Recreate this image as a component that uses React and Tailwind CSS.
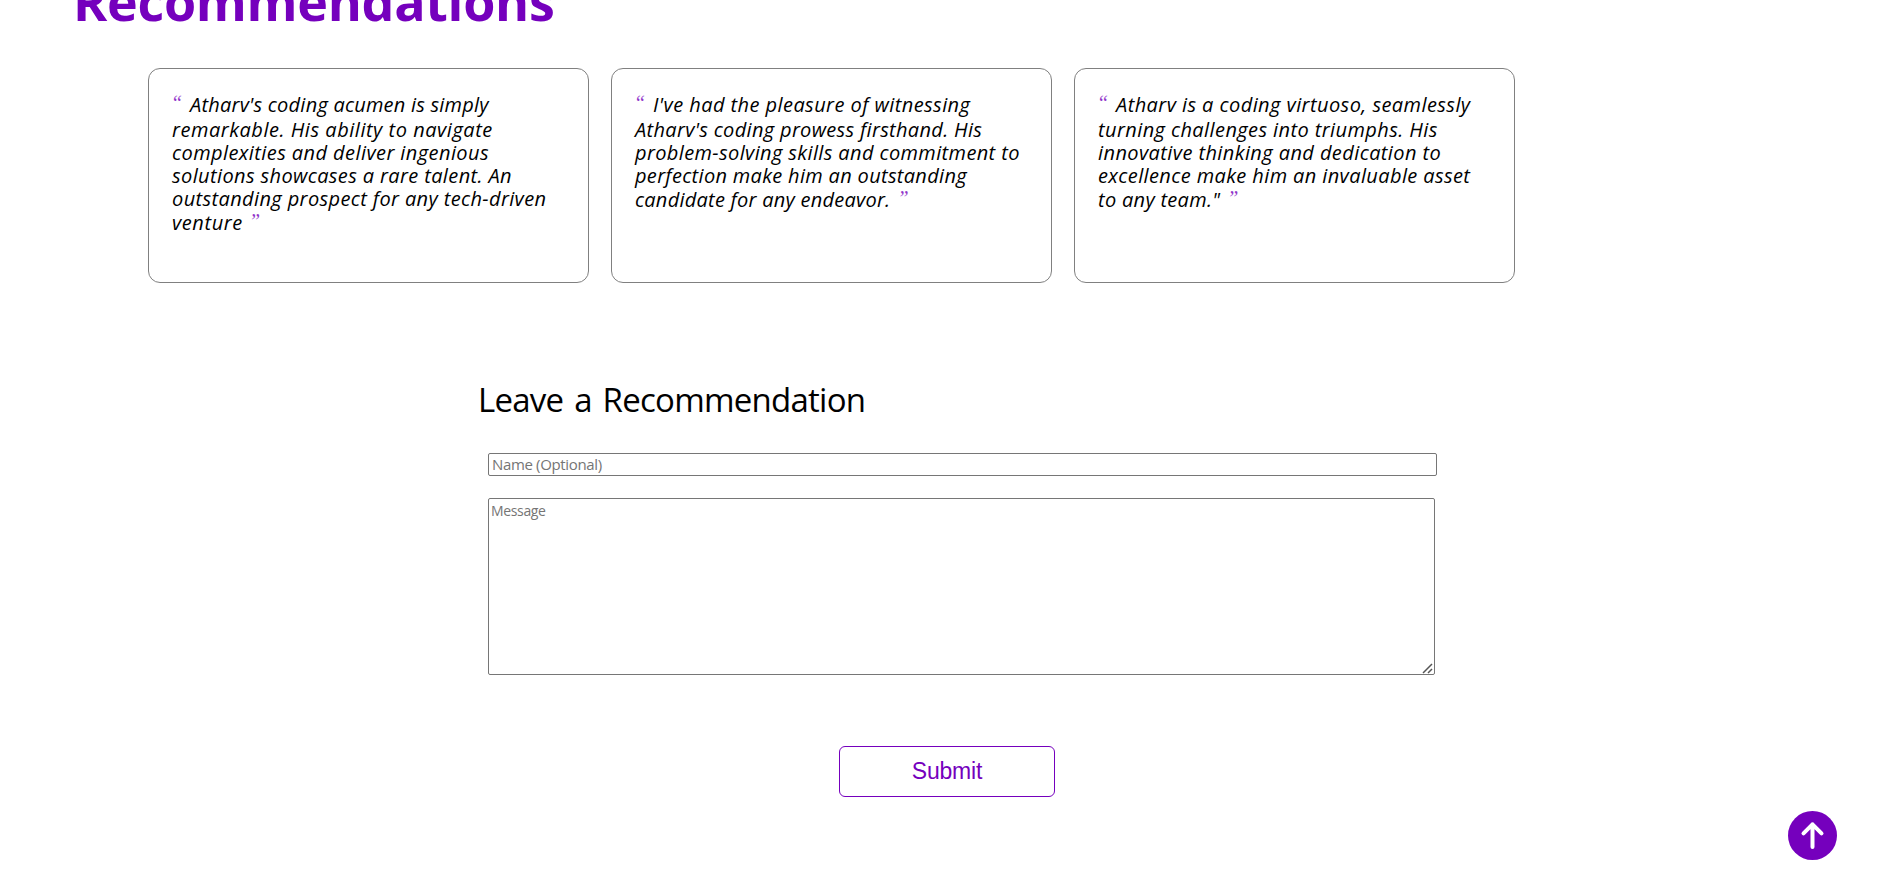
const quotes = [
  {
    lines: [
      ["Atharv's coding acumen is simply", 'tracking-[0.22px]'],
      ['remarkable. His ability to navigate', 'tracking-[0.53px]'],
      ['complexities and deliver ingenious', 'tracking-[0.42px]'],
      ['solutions showcases a rare talent. An', 'tracking-[0.38px]'],
      ['outstanding prospect for any tech-driven', 'tracking-[0.38px]'],
      ['venture', 'tracking-[0.6px]'],
    ],
    gap: 'ml-[6px]',
  },
  {
    lines: [
      ["I've had the pleasure of witnessing", 'tracking-[0.43px]'],
      ["Atharv's coding prowess firsthand. His", 'tracking-[0.32px]'],
      ['problem-solving skills and commitment to', 'tracking-[0.38px]'],
      ['perfection make him an outstanding', 'tracking-[0.32px]'],
      ['candidate for any endeavor.', 'tracking-[0.25px]'],
    ],
    gap: 'ml-[7px]',
  },
  {
    lines: [
      ['Atharv is a coding virtuoso, seamlessly', 'tracking-[0.43px]'],
      ['turning challenges into triumphs. His', 'tracking-[0.41px]'],
      ['innovative thinking and dedication to', 'tracking-[0.41px]'],
      ['excellence make him an invaluable asset', 'tracking-[0.39px]'],
      ['to any team."', 'tracking-[0.3px]'],
    ],
    gap: 'ml-[7px]',
  },
];

function Mark({ children, className }) {
  return (
    <span className={`-mt-px font-['Liberation_Serif',serif] text-[20px] leading-[22px] text-[#7500bd]/80 ${className}`}>
      {children}
    </span>
  );
}

function Card({ lines, gap }) {
  return (
    <blockquote className="h-[215px] w-[441px] rounded-[12px] border border-[#808080] pt-[24px] pl-[23px] font-['Open_Sans',sans-serif] text-[20px] leading-[23px] text-black italic">
      {lines.map(([text, tracking], i) => (
        <div
          key={text}
          className={`flex h-[23px] whitespace-nowrap ${i === 0 ? 'mb-[2px]' : ''} ${i === lines.length - 1 ? 'mt-[1px]' : ''}`}
        >
          {i === 0 && <Mark className="w-[18px] -indent-px">“</Mark>}
          <span className={tracking}>{text}</span>
          {i === lines.length - 1 && <Mark className={gap}>”</Mark>}
        </div>
      ))}
    </blockquote>
  );
}

export default function App() {
  return (
    <div className="h-[887px] w-full overflow-hidden bg-white">
      <section className="h-[68px] overflow-hidden pl-[73px]">
        <h1 className="-mt-[35px] font-['Open_Sans',sans-serif] text-[52px] leading-[72px] font-[670] tracking-[-0.3px] text-[#7500bd]">
          Recommendations
        </h1>
      </section>
      <section className="flex gap-[22px] pl-[148px]">
        {quotes.map((q) => (
          <Card key={q.lines[0][0]} {...q} />
        ))}
      </section>
      <form className="flex flex-col pl-[478px] font-['Open_Sans',sans-serif]" onSubmit={(e) => e.preventDefault()}>
        <h2 className="mt-[95px] h-[44px] text-[33px] leading-[44px] tracking-[-0.75px] text-black [word-spacing:3px]">
          Leave a Recommendation
        </h2>
        <input
          placeholder="Name (Optional)"
          className="mt-[31px] ml-[10px] h-[23px] w-[949px] rounded-[2px] border border-[#767676] px-[3px] pb-[2px] text-[15px] leading-[18px] tracking-[-0.35px] placeholder:text-[#757575]"
        />
        <div className="relative mt-[22px] ml-[10px] h-[177px] w-[947px]">
          <textarea
            placeholder="Message"
            className="block h-[177px] w-[947px] resize-none rounded-[2px] border border-[#767676] px-[2px] py-[3px] text-[14px] leading-[18px] tracking-[-0.35px] placeholder:text-[#757575]"
          />
          <svg className="absolute right-[2px] bottom-[1px]" width="11" height="11" viewBox="0 0 11 11" fill="none" stroke="#555" strokeWidth="1.5">
            <path d="M1 10L10 1M6 10L10 6" />
          </svg>
        </div>
        <button className="mt-[71px] ml-[361px] h-[51px] w-[216px] rounded-[6px] border border-[#7500bd] font-['Liberation_Sans',sans-serif] text-[23px] tracking-[-0.2px] text-[#7500bd]">
          Submit
        </button>
      </form>
      <button className="fixed right-[43px] bottom-[27px] flex size-[49px] items-center justify-center rounded-full bg-[#7500bd]">
        <svg width="49" height="49" viewBox="0 0 49 49" fill="none" stroke="#fff" strokeWidth="4" strokeLinecap="round" strokeLinejoin="round">
          <path d="M24.5 36V13.2M15.5 22.3L24.5 13.3L33.5 22.3" />
        </svg>
      </button>
    </div>
  );
}
